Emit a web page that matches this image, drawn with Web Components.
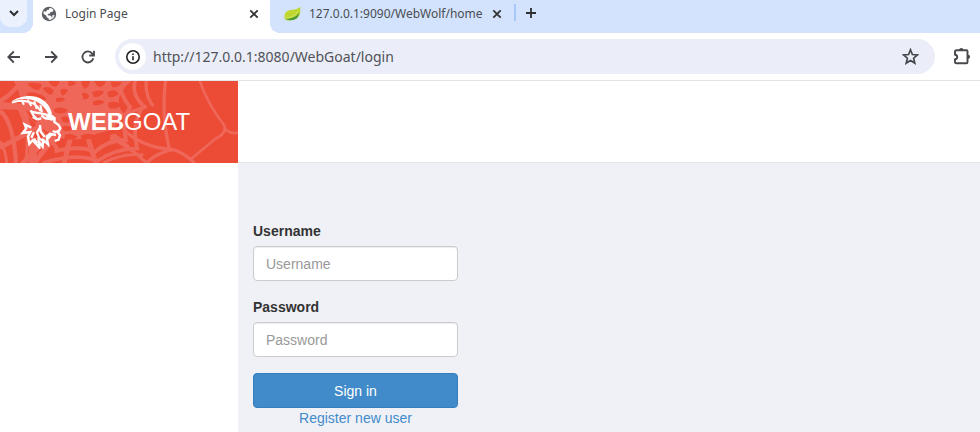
<!DOCTYPE html>
<html lang="en">
<head>
<meta charset="utf-8">
<title>Login Page</title>
<style>
  html, body { height: 100%; }
  body { margin: 0; font-family: "Liberation Sans", Arial, sans-serif; font-size: 14px; color: #333; background: #fff; overflow: hidden; }
</style>
</head>
<body>
<browser-window>
  <tab-strip slot="tabs">
    <browser-tab active>
      <svg slot="icon" viewBox="0 0 16 16" width="16" height="16"><circle cx="8" cy="8" r="7.2" fill="#5b5f64"/><path d="M8.3 2.3 9.8 2l2.4 1.2.2 1.6-1.4 1.1-1.5.2-.6 1.4-2 .5-.2 1.3 3.1.4 1 1.6-1 1.7-1.5.6-.6-1.3-1.8-.7-.6-1.9-3-2.2.6-2.4 1.7.6 1-.4.2-1.2 2-.4z" fill="#fff"/><path d="M8.2 11.2 7.4 14l2.5-.2 2.6-1.6 1.2-3-1.4-.4-1 .8-.3 1.5-1.3.8z" fill="#fff" opacity=".8"/></svg>
      Login Page
    </browser-tab>
    <browser-tab>
      <svg slot="icon" viewBox="0 0 17 16" width="17" height="16"><path d="M16 .8c.9 4.400.5 9.200-3.200 11.700C9.300 14.600 3.500 15.200.8 13.200-.4 8.700 1.300 5.400 5.200 4.300 9 3.500 13.300 4 16 .8z" fill="#bfd730"/><path d="M1.200 12.800C7 12.600 12.500 11 15.200 6.400c-.2 3.600-1.800 6.200-4.600 7.100-3 1-7 1-9.400-.7z" fill="#4a9a3a"/><path d="M1.500 12.200C6.500 11.800 11.700 9.800 14.600 4.600" fill="none" stroke="#d9e86b" stroke-width=".8"/></svg>
      127.0.0.1:9090/WebWolf/home
    </browser-tab>
  </tab-strip>
  <address-bar slot="toolbar" url="http://127.0.0.1:8080/WebGoat/login"></address-bar>
  <goat-page>
    <goat-logo slot="brand"></goat-logo>
    <login-form></login-form>
  </goat-page>
</browser-window>

<script>
function define(name, html, setup) {
  const template = document.createElement('template');
  template.innerHTML = html;
  customElements.define(name, class extends HTMLElement {
    constructor() {
      super();
      this.attachShadow({ mode: 'open' }).append(template.content.cloneNode(true));
    }
    connectedCallback() { if (setup) setup(this, this.shadowRoot); }
  });
}

define('browser-window', `
<style>
  :host { display: flex; flex-direction: column; min-height: 100vh; }
  main { flex: 1; display: flex; flex-direction: column; }
</style>
<slot name="tabs"></slot><slot name="toolbar"></slot><main><slot></slot></main>`);

define('tab-strip', `
<style>
  :host { display: flex; align-items: flex-start; height: 33px; background: #d3e3fd; font-family: "Noto Sans", sans-serif; }
  button { border: 0; padding: 0; background: none; display: grid; place-items: center; color: #2d2f32; }
  .list { width: 27px; height: 27px; background: #ecf2fd; border-radius: 0 0 10px 10px; margin-right: 6px; }
  .add { width: 32px; border-left: 2px solid #a8c7fa; height: 17px; margin-top: 4px; }
</style>
<button class="list" aria-label="Search tabs"><svg width="12" height="12" viewBox="0 0 12 12"><path d="m2 3 4 4 4-4" fill="none" stroke="currentColor" stroke-width="2"/></svg></button>
<slot></slot>
<button class="add" aria-label="New tab"><svg width="12" height="12" viewBox="0 0 12 12"><path d="M6 1v10M1 6h10" stroke="currentColor" stroke-width="1.800"/></svg></button>`);

define('browser-tab', `
<style>
  :host { position: relative; display: flex; align-items: center; box-sizing: border-box; height: 33px; padding: 0 11px 6px 14px; gap: 8px; font-size: 12px; color: #4a4d51; }
  :host([active]) { width: 237px; background: #fff; padding: 0 10px 6px 8px; }
  :host([active])::before, :host([active])::after { content: ""; position: absolute; bottom: 0; width: 10px; height: 10px; }
  :host([active])::before { right: 100%; background: radial-gradient(circle at 0 0, #d3e3fd 10px, #fff 10px); }
  :host([active])::after { left: 100%; background: radial-gradient(circle at 100% 0, #d3e3fd 10px, #fff 10px); }
  span { flex: 1; white-space: nowrap; }
  button { border: 0; padding: 0; width: 12px; height: 12px; background: none; color: #333; display: grid; }
</style>
<slot name="icon"></slot><span><slot></slot></span>
<button aria-label="Close tab"><svg width="12" height="12" viewBox="0 0 12 12"><path d="m2.300 2.300 7.400 7.400m0-7.400-7.400 7.400" stroke="currentColor" stroke-width="1.800"/></svg></button>`);

define('address-bar', `
<style>
  :host { display: flex; align-items: center; height: 47px; border-bottom: 1px solid #e2e4e8; background: #fff; color: #46484b; }
  button { border: 0; padding: 0; background: none; color: inherit; display: grid; place-items: center; flex: none; }
  nav { display: flex; gap: 21px; padding: 0 19px 0 6px; }
  .field { flex: 1; min-width: 0; display: flex; align-items: center; height: 35px; border-radius: 18px; background: #ebeef8; padding: 0 16px 0 4px; gap: 7px; }
  .info { width: 27px; height: 27px; border-radius: 50%; background: #fff; color: #222; }
  input { flex: 1; min-width: 0; border: 0; outline: 0; padding: 0; background: none; font: 14px "Noto Sans", sans-serif; color: #505257; }
  .ext { margin: 0 8px 0 17px; }
</style>
<nav>
  <button aria-label="Back"><svg width="16" height="16" viewBox="0 0 16 16"><path d="M14 8H2.500M7.800 2.500 2.300 8l5.500 5.500" fill="none" stroke="currentColor" stroke-width="1.800"/></svg></button>
  <button aria-label="Forward"><svg width="16" height="16" viewBox="0 0 16 16"><path d="M2 8h11.500M8.200 2.500 13.700 8l-5.500 5.500" fill="none" stroke="currentColor" stroke-width="1.800"/></svg></button>
  <button aria-label="Reload"><svg width="16" height="16" viewBox="0 0 16 16"><path d="M13.300 9.200A5.500 5.500 0 1 1 12.300 4.600L14 6.300M14 1.800v4.700H9.300" fill="none" stroke="currentColor" stroke-width="1.800"/></svg></button>
</nav>
<div class="field">
  <button class="info" aria-label="Site information"><svg width="16" height="16" viewBox="0 0 16 16"><circle cx="8" cy="8" r="6.200" fill="none" stroke="currentColor" stroke-width="1.600"/><path d="M8 7.200v4M8 4.400v1.700" stroke="currentColor" stroke-width="1.600"/></svg></button>
  <input aria-label="Address">
  <button aria-label="Bookmark"><svg width="17" height="17" viewBox="0 0 17 17"><path d="m8.500 1.800 1.900 4.700 5 .4-3.800 3.300 1.200 4.900-4.300-2.600-4.300 2.600 1.200-4.900-3.800-3.300 5-.4z" fill="none" stroke="currentColor" stroke-width="1.700"/></svg></button>
</div>
<button class="ext" aria-label="Extensions"><svg width="20" height="20" viewBox="0 0 20 20"><path d="M4.500 3.300h10q1 0 1 1v11q0 1-1 1h-10q-1.500 0-1.500-1v-3c3-.4 3-4.200 0-4.600v-3.400q0-1 1.500-1z" fill="none" stroke="currentColor" stroke-width="1.900" stroke-linejoin="round"/><path d="M7.200 3a2 2 0 0 1 4.200 0zM16 7.700a2 2 0 0 1 0 4.200z" fill="currentColor"/></svg></button>`,
(host, root) => { root.querySelector('input').value = host.getAttribute('url'); });

define('goat-page', `
<style>
  :host { flex: 1; display: grid; grid-template: auto 1fr / 238px 1fr; }
  header { background: #fff; border-bottom: 1px solid #e4e6ec; }
  aside { background: #fff; }
  section { background: #f0f1f7; padding: 58px 15px 3px; }
</style>
<slot name="brand"></slot><header></header><aside></aside><section><slot></slot></section>`);

define('goat-logo', `
<style>
  :host { position: relative; display: flex; align-items: center; height: 82px; background: #ec4b36; color: #fff; overflow: hidden; }
  .web { position: absolute; inset: 0; width: 100%; height: 100%; }
  a { position: relative; display: flex; align-items: center; color: inherit; text-decoration: none; font-size: 24px; line-height: 28px; padding-left: 10px; gap: 6px; }
</style>
<svg class="web" viewBox="0 0 714 246" preserveAspectRatio="xMinYMin slice" aria-hidden="true">
  <path d="M38-5H400Q330 50 372 100 350 150 290 158 250 182 185 172 120 150 62 84 66 40 38-5z" fill="#ef6759"/>
  <g fill="none" stroke="#ef6759">
    <path stroke-width="15" d="M235 75 0 78M235 75 350-10M235 75 385 200M235 75 290 256M235 75 190 256M235 75 95 256M235 75 0 200M235 75 60 256"/>
    <path stroke-width="12" d="M98 80Q108 140 140 170 184 205 164 212 232 192 285 212 326 176 378 176 364 122 390 78 355 36 360-8"/>
    <path stroke-width="11" d="M58 82Q100 160 108 246M128 246Q232 214 292 240 342 204 412 202 392 134 430 74 388 36 410-10"/>
    <path stroke-width="20" d="M-5 72 62 78Q105 180 96 246"/>
    <path stroke-width="13" d="M0 90Q40 120 48 246M0 60Q40 38 68-5"/>
    <path stroke-width="9" d="M0 180Q18 210 20 246M75 130Q88 180 76 246M310 246Q370 214 430 222"/>
    <path stroke-width="10" d="M372 100 440 76M375 150Q430 200 520 206 550 215 584 246M330 170Q380 190 440 246M440-10Q432 40 460 76M498-10Q482 90 508 205M440 246Q470 214 520 206"/>
    <path stroke-width="8" d="M598-5Q620 65 672 132 684 154 645 174 600 212 568 238M672 140Q690 162 718 154"/>
  </g>
  <g fill="#ec4b36">
    <path d="M82 8Q104 2 126 10 124 22 114 28 94 24 82 8zM146 2Q160-8 178 0 176 14 166 18 152 14 146 2zM78 38Q98 28 118 40 136 44 138 56 110 66 78 38zM128 22Q146 12 160 26 162 38 150 42 136 34 128 22z"/>
    <path d="M180 28Q192 18 204 28 200 40 186 44zM168 52Q184 46 196 54 186 66 168 62zM204 2Q216-4 230 6 218 18 206 14zM244 0H270Q268 18 254 24 244 14 244 0zM282 0H318Q310 20 294 18zM332 2H366Q356 22 336 18z"/>
    <path d="M246 36Q260 32 268 46 262 58 250 54zM276 34Q296 24 312 32 302 50 282 48zM278 62Q298 52 314 62 300 76 280 72zM322 34Q344 20 356 38 342 52 326 48zM324 66Q346 54 364 74 344 88 326 80z"/>
    <path d="M162 84Q184 74 204 88 190 104 164 94zM184 108Q204 102 214 116 204 132 186 120zM242 164Q268 152 288 164 270 178 246 174zM194 162Q212 154 234 168 214 180 194 174zM186 138Q202 128 222 144 208 154 188 148zM308 156Q334 140 350 156 330 166 310 164zM78 88Q104 96 112 128 92 118 78 88z"/>
  </g>
</svg>
<a href="#">
  <svg width="52" height="54" viewBox="30 42 156 162" aria-hidden="true">
    <path d="M33 64C50 48 84 41 110 48 138 57 152 77 156 100L147 104C139 83 126 70 108 61 85 51 55 52 33 64z" fill="#fff"/>
    <path d="M36 65Q64 54 90 64 108 68 122 91M64 56 72 71M83 56 94 75M103 61 110 84M121 72 126 94" fill="none" stroke="#fff" stroke-width="6"/>
    <g fill="none" stroke="#fff" stroke-width="7" stroke-linejoin="miter">
      <path d="M92 88Q98 104 112 115L98 108M94 92Q112 96 126 98L153 104 164 112 163 123 176 132 181 142 174 155 180 162 176 176 164 180"/>
      <path d="M124 103 136 112 154 114 142 105M112 115 124 112"/>
      <path d="M180 148 166 153 158 150M168 162 150 158 140 166 144 190 130 177 128 197 116 180 118 200 98 178 88 189 84 166 91 153 68 156 79 142 74 130 94 140"/>
      <path d="M120 132 122 152 134 168M120 140 111 154 118 172 134 184M102 154 94 170M102 172 112 188"/>
    </g>
    <path d="M136 102 158 102 166 112 154 119 140 112zM140 166 150 158 164 160 154 166 146 176z" fill="#fff"/>
  </svg>
  <span><b>WEB</b>GOAT</span>
</a>`);

define('login-form', `
<style>
  :host { display: block; max-width: 205px; }
  form { display: flex; flex-direction: column; }
  label { font-weight: 700; line-height: 20px; margin-bottom: 5px; }
  input, button { box-sizing: border-box; width: 100%; font: inherit; border-radius: 4px; height: 35px; padding: 0 12px; }
  input { border: 1px solid #ccc; background: #fff; margin-bottom: 16px; box-shadow: inset 0 1px 1px rgba(0,0,0,.075); color: #555; }
  input::placeholder { color: #999; opacity: 1; }
  button { background: #428bca; color: #fff; border: 1px solid #357ebd; }
  a { align-self: center; line-height: 20px; color: #428bca; text-decoration: none; }
</style>
<form>
  <label for="user">Username</label>
  <input id="user" type="text" placeholder="Username">
  <label for="pass">Password</label>
  <input id="pass" type="password" placeholder="Password">
  <button type="button">Sign in</button>
  <a href="#">Register new user</a>
</form>`);
</script>
</body>
</html>
